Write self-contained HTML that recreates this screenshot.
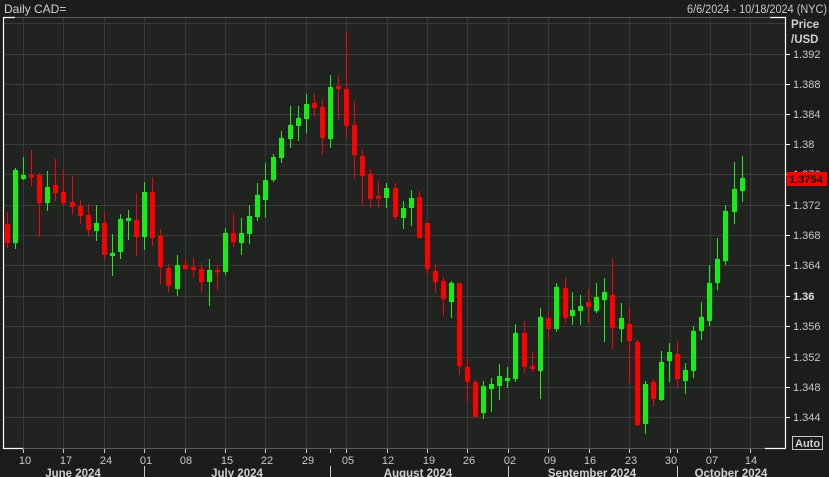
<!DOCTYPE html>
<html><head><meta charset="utf-8"><style>
html,body{margin:0;padding:0;background:#1c1c1e;}
svg{display:block}
text{font-family:"Liberation Sans",sans-serif;}
</style></head><body>
<svg width="829" height="477" viewBox="0 0 829 477" xmlns="http://www.w3.org/2000/svg">
<rect width="829" height="477" fill="#1c1c1e"/>
<rect x="3" y="17" width="783" height="432" fill="#212321"/>
<g stroke="#383a38" stroke-width="1">
<path d="M3 23.5H786M3 54.5H786M3 84.5H786M3 114.5H786M3 144.5H786M3 174.5H786M3 205.5H786M3 235.5H786M3 265.5H786M3 296.5H786M3 326.5H786M3 357.5H786M3 387.5H786M3 417.5H786"/>
<path d="M23.5 17V449M63.5 17V449M104.5 17V449M144.5 17V449M185.5 17V449M225.5 17V449M265.5 17V449M306.5 17V449M346.5 17V449M387.5 17V449M427.5 17V449M467.5 17V449M508.5 17V449M548.5 17V449M589.5 17V449M629.5 17V449M670.5 17V449M710.5 17V449M750.5 17V449"/>
</g>
<path d="M3 17.5H786M3 448.5H786" stroke="#5a5a5a"/>
<path d="M3.5 17V449M3 17.5H15M3 448.5H23M770 17.5H786M785.5 17V449M765 448.5H786" stroke="#ffffff" stroke-width="1.2" fill="none"/>
<!-- red -->
<g stroke="#ff0000" fill="none">
<path stroke-width="1" d="M7.5 212V248M31.5 150V186M39.5 173V237M55.5 159V201M63.5 170V206M72.5 176V215M80.5 200V224M88.5 204V236M104.5 213V259M136.5 193V256M152.5 177V246M160.5 229V284M168.5 264V292M185.5 259V270M193.5 258V277M201.5 263V292M217.5 265V290M233.5 213V247M314.5 94V117M322.5 99V154M338.5 76V120M346.5 32V138M354.5 101V179M362.5 150V205M370.5 169V208M378.5 181V208M395.5 183V220M419.5 191V238M427.5 223V275M435.5 264V293M443.5 277V316M459.5 283V375M467.5 359V402M475.5 380V417M524.5 321V373M532.5 352V372M548.5 311V339M565.5 278V323M588.5 289V323M612.5 259V349M629.5 307V383M637.5 340V426M653.5 379V406M677.5 341V388"/>
<path stroke-width="5" d="M7.5 224V243M31.5 175V177.5M39.5 175V203M55.5 185V193M63.5 192V203M72.5 202V207M80.5 206V216M88.5 215V230M104.5 223V255M136.5 220V237M152.5 192V238M160.5 236V267M168.5 268V286M185.5 265V269M193.5 267V270M201.5 269V282M217.5 270V272.5M233.5 233V242M314.5 103V108M322.5 107V138M338.5 86V89M346.5 89V126M354.5 125V155M362.5 156V176M370.5 174V199M378.5 196V198.5M395.5 188V217M419.5 197V238M427.5 223V269M435.5 271V282M443.5 281V299M459.5 283V366M467.5 367V382M475.5 382V417M524.5 333V367M532.5 366V369M548.5 318V329M565.5 288V318M588.5 302V307M612.5 295V328M629.5 324V341M637.5 342V425M653.5 382V399M677.5 354V379"/>
</g>
<!-- green -->
<g stroke="#12f012" fill="none">
<path stroke-width="1" d="M15.5 168V249M23.5 157V180M47.5 171V211M96.5 205V241M112.5 234V276M120.5 214V259M128.5 210V240M144.5 182V250M177.5 255V296M209.5 259V306M225.5 228V275M241.5 218V255M249.5 205V244M257.5 183V221M265.5 163V218M273.5 154V182M281.5 131V163M290.5 106V148M298.5 106V141M306.5 94V133M330.5 75V148M386.5 183V208M403.5 201V229M411.5 190V226M451.5 281V318M483.5 381V419M491.5 378V412M499.5 364V400M507.5 367V388M515.5 324V382M540.5 308V399M556.5 283V332M572.5 292V325M580.5 295V325M596.5 283V313M604.5 278V342M621.5 303V342M645.5 381V434M661.5 351V401M669.5 343V382M685.5 363V394M693.5 326V378M701.5 302V340M709.5 265V326M717.5 238V290M725.5 205V265M734.5 162V224M742.5 156V202"/>
<path stroke-width="5" d="M15.5 170V243M23.5 175V179M47.5 187V203M96.5 223V231M112.5 253V256M120.5 219V252M128.5 218V221M144.5 192V237M177.5 265V289M209.5 270V282M225.5 233V272M241.5 233V243M249.5 216V234M257.5 195V217M265.5 180V200M273.5 157V180M281.5 138V158M290.5 125V139M298.5 118V126M306.5 104V119M330.5 87V139M386.5 188V198M403.5 208V218M411.5 198V208M451.5 283V302M483.5 386V413M491.5 384V389M499.5 376V386M507.5 378V381M515.5 333V379M540.5 317V371M556.5 287V329M572.5 310V316M580.5 306V311M596.5 297V311M604.5 292V300M621.5 318V329M645.5 384V424M661.5 362V400M669.5 352V361M685.5 370V381M693.5 331V371M701.5 317V331M709.5 283V321M717.5 259V283M725.5 211V261M734.5 189V212M742.5 178V191"/>
</g>
<!-- header -->
<text x="4" y="13" font-size="12" fill="#d0d0d0">Daily CAD=</text>
<text x="827" y="13" font-size="11.5" fill="#c8c8c8" text-anchor="end" textLength="140" lengthAdjust="spacingAndGlyphs">6/6/2024 - 10/18/2024 (NYC)</text>
<!-- right axis -->
<text x="791" y="28" font-size="11.5" font-weight="bold" fill="#d0d0d0">Price</text>
<text x="791" y="43" font-size="11.5" font-weight="bold" fill="#d0d0d0">/USD</text>
<g stroke="#ffffff"><path d="M786 54.5H790M786 84.5H790M786 114.5H790M786 144.5H790M786 174.5H790M786 205.5H790M786 235.5H790M786 265.5H790M786 296.5H790M786 326.5H790M786 357.5H790M786 387.5H790M786 417.5H790"/></g>
<g font-size="11" fill="#c8c8c8">
<text x="793" y="58">1.392</text>
<text x="793" y="88">1.388</text>
<text x="793" y="118">1.384</text>
<text x="793" y="148">1.38</text>
<text x="793" y="178">1.376</text>
<text x="793" y="209">1.372</text>
<text x="793" y="239">1.368</text>
<text x="793" y="269">1.364</text>
<text x="793" y="300" font-weight="bold" fill="#e0e0e0">1.36</text>
<text x="793" y="330">1.356</text>
<text x="793" y="361">1.352</text>
<text x="793" y="391">1.348</text>
<text x="793" y="421">1.344</text>
</g>
<rect x="787" y="172" width="40" height="14" fill="#ff0000"/>
<text x="789" y="183" font-size="11" font-weight="bold" fill="#000">1.3754</text>
<rect x="792.5" y="436.5" width="30" height="13" fill="none" stroke="#c8c8c8"/>
<text x="795" y="447" font-size="11" font-weight="bold" fill="#d0d0d0">Auto</text>
<!-- bottom axis -->
<g stroke="#c8c8c8"><path d="M23.5 449V453M63.5 449V453M104.5 449V453M144.5 449V453M185.5 449V453M225.5 449V453M265.5 449V453M306.5 449V453M330.5 449V453M346.5 449V453M387.5 449V453M427.5 449V453M467.5 449V453M508.5 449V453M548.5 449V453M589.5 449V453M629.5 449V453M677.5 449V453M670.5 449V453M710.5 449V453M750.5 449V453M144.5 466V477M330.5 466V477M508.5 466V477M677.5 466V477"/></g>
<g font-size="11" fill="#c8c8c8" text-anchor="middle">
<text x="25" y="464">10</text><text x="66" y="464">17</text><text x="106" y="464">24</text><text x="146" y="464">01</text><text x="186" y="464">08</text><text x="227" y="464">15</text><text x="267" y="464">22</text><text x="308" y="464">29</text><text x="348" y="464">05</text><text x="388" y="464">12</text><text x="429" y="464">19</text><text x="469" y="464">26</text><text x="510" y="464">02</text><text x="550" y="464">09</text><text x="590" y="464">16</text><text x="631" y="464">23</text><text x="671" y="464">30</text><text x="712" y="464">07</text><text x="751" y="464">14</text>
</g>
<g font-size="11.5" font-weight="bold" fill="#d0d0d0" text-anchor="middle">
<text x="73" y="477">June 2024</text>
<text x="237" y="477">July 2024</text>
<text x="418" y="477">August 2024</text>
<text x="592" y="477">September 2024</text>
<text x="731" y="477">October 2024</text>
</g>
</svg>
</body></html>
